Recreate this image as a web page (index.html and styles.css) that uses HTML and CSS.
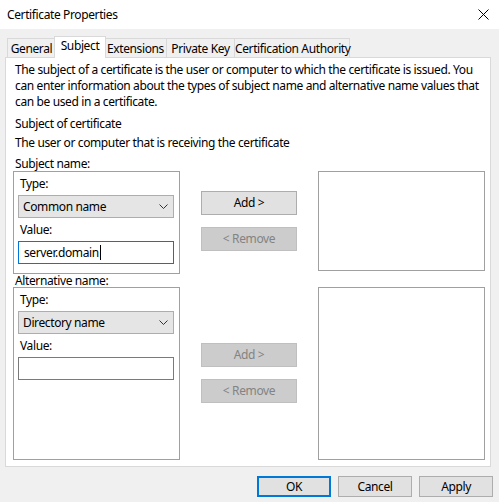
FILE: index.html
```html
<!DOCTYPE html>
<html>
<head>
<meta charset="utf-8">
<title>Certificate Properties</title>
<link rel="stylesheet" href="styles.css">
</head>
<body>
<div class="window">
  <div class="titlebar">
    <span class="title">Certificate Properties</span>
    <svg class="close" width="11" height="11" viewBox="0 0 11 11"><path d="M0.5 0.5 L10.5 10.5 M10.5 0.5 L0.5 10.5" stroke="#000" stroke-width="1" fill="none"/></svg>
  </div>
  <div class="body">
    <div class="tabs">
      <div class="tab t-general">General</div>
      <div class="tab t-subject selected">Subject</div>
      <div class="tab t-ext">Extensions</div>
      <div class="tab t-pk">Private Key</div>
      <div class="tab t-ca">Certification Authority</div>
    </div>
    <div class="panel">
      <p class="intro">The subject of a certificate is the user or computer to which the certificate is issued. You<br>can enter information about the types of subject name and alternative name values that<br>can be used in a certificate.</p>
      <p class="heading">Subject of certificate</p>
      <p class="sub">The user or computer that is receiving the certificate</p>
      <div class="section">
        <div class="grp-label first">Subject name:</div>
        <div class="group g1">
          <div class="lbl">Type:</div>
          <div class="combo"><span>Common name</span><svg width="9" height="5" viewBox="0 0 9 5"><path d="M0.5 0.5 L4.5 4.5 L8.5 0.5" stroke="#333" fill="none"/></svg></div>
          <div class="lbl">Value:</div>
          <div class="input focused"><span>server.domain</span><i class="caret"></i></div>
        </div>
        <div class="buttons b1">
          <div class="btn">Add &gt;</div>
          <div class="btn disabled">&lt; Remove</div>
        </div>
        <div class="list l1"></div>
        <div class="grp-label second">Alternative name:</div>
        <div class="group g2">
          <div class="lbl">Type:</div>
          <div class="combo"><span>Directory name</span><svg width="9" height="5" viewBox="0 0 9 5"><path d="M0.5 0.5 L4.5 4.5 L8.5 0.5" stroke="#333" fill="none"/></svg></div>
          <div class="lbl">Value:</div>
          <div class="input"></div>
        </div>
        <div class="buttons b2">
          <div class="btn disabled">Add &gt;</div>
          <div class="btn disabled">&lt; Remove</div>
        </div>
        <div class="list l2"></div>
      </div>
    </div>
    <div class="footer">
      <div class="fbtn default">OK</div>
      <div class="fbtn">Cancel</div>
      <div class="fbtn">Apply</div>
    </div>
  </div>
</div>
</body>
</html>
```
FILE: styles.css
```css
* { box-sizing: border-box; }
html, body { margin: 0; padding: 0; }
body {
  width: 499px;
  height: 502px;
  background: #f0f0f0;
  font-family: "Noto Sans", "Open Sans", sans-serif;
  font-size: 12px;
  letter-spacing: -0.38px;
  color: #000;
  overflow: hidden;
}
.window { width: 499px; height: 502px; }
.titlebar {
  height: 29px;
  background: #fff;
  display: flex;
  align-items: center;
  justify-content: space-between;
  padding: 0 10px 0 7px;
}
.title { font-size: 12px; line-height: 16px; }
.close { display: block; margin-top: -1px; }

.body { padding: 7px 8px 0 5px; }

.tabs {
  display: flex;
  align-items: flex-end;
  height: 22px;
  margin-bottom: -1px;
  padding-left: 2px;
}
.tab {
  height: 19px;
  margin-bottom: 1px;
  border: 1px solid #d9d9d9;
  border-bottom: none;
  background: #f0f0f0;
  margin-left: -1px;
  text-align: center;
  line-height: 19px;
  white-space: nowrap;
}
.t-general { width: 49px; margin-left: 0; }
.t-subject { width: 52px; margin-left: -2px; }
.t-ext { width: 63px; }
.t-pk { width: 69px; }
.t-ca { width: 116px; }
.tab.selected {
  height: 22px;
  margin-bottom: 0;
  background: #fff;
  line-height: 17px;
  position: relative;
  z-index: 1;
}
.tab.selected + .tab { margin-left: -2px; }

.panel {
  width: 486px;
  height: 410px;
  background: #fff;
  border: 1px solid #d9d9d9;
  padding: 4px 0 0 9px;
}
.panel p { margin: 0; line-height: 16px; white-space: nowrap; }
.heading { margin-top: 6px !important; }
.sub { margin-top: 3px !important; }

.section {
  margin-left: -2px;
  margin-top: 6px;
  display: grid;
  grid-template-columns: 167px 96px 167px;
  column-gap: 21px;
  grid-template-rows: 14px 103px 13px 173px;
}
.grp-label { grid-column: 1; padding-left: 2px; line-height: 14px; }
.grp-label.second { line-height: 13px; }
.g1, .b1, .l1 { grid-row: 2; }
.g2, .b2, .l2 { grid-row: 4; }
.group {
  grid-column: 1;
  border: 1px solid #a0a0a0;
  padding: 3px 5px 0 4px;
}
.lbl { height: 18px; line-height: 18px; padding-left: 2px; }
.combo {
  height: 23px;
  margin: 2px 0 3px;
  background: #e5e5e5;
  border: 1px solid #adadad;
  display: flex;
  align-items: center;
  justify-content: space-between;
  padding: 0 5px 0 4px;
}
.combo svg { display: block; }
.input {
  height: 23px;
  margin-top: 2px;
  border: 1px solid #7a7a7a;
  background: #fff;
  padding-left: 5px;
  display: flex;
  align-items: center;
}
.input.focused { border-color: #0078d7; }
.caret { display: inline-block; width: 1px; height: 15px; background: #000; margin-left: 1px; }

.buttons {
  grid-column: 2;
  display: flex;
  flex-direction: column;
  gap: 12px;
}
.b1 { padding-top: 20px; }
.b2 { padding-top: 56px; }
.btn {
  height: 24px;
  background: #e1e1e1;
  border: 1px solid #adadad;
  text-align: center;
  line-height: 21px;
}
.btn.disabled { background: #cccccc; border-color: #bfbfbf; color: #838383; }

.list { grid-column: 3; border: 1px solid #a0a0a0; background: #fff; }
.l1 { height: 100px; }

.footer {
  display: flex;
  justify-content: flex-end;
  gap: 7px;
  margin-top: 9px;
  margin-right: -2px;
}
.fbtn {
  width: 74px;
  height: 21px;
  background: #e1e1e1;
  border: 1px solid #adadad;
  text-align: center;
  line-height: 19px;
}
.fbtn.default { border: 2px solid #0078d7; line-height: 17px; }
```
